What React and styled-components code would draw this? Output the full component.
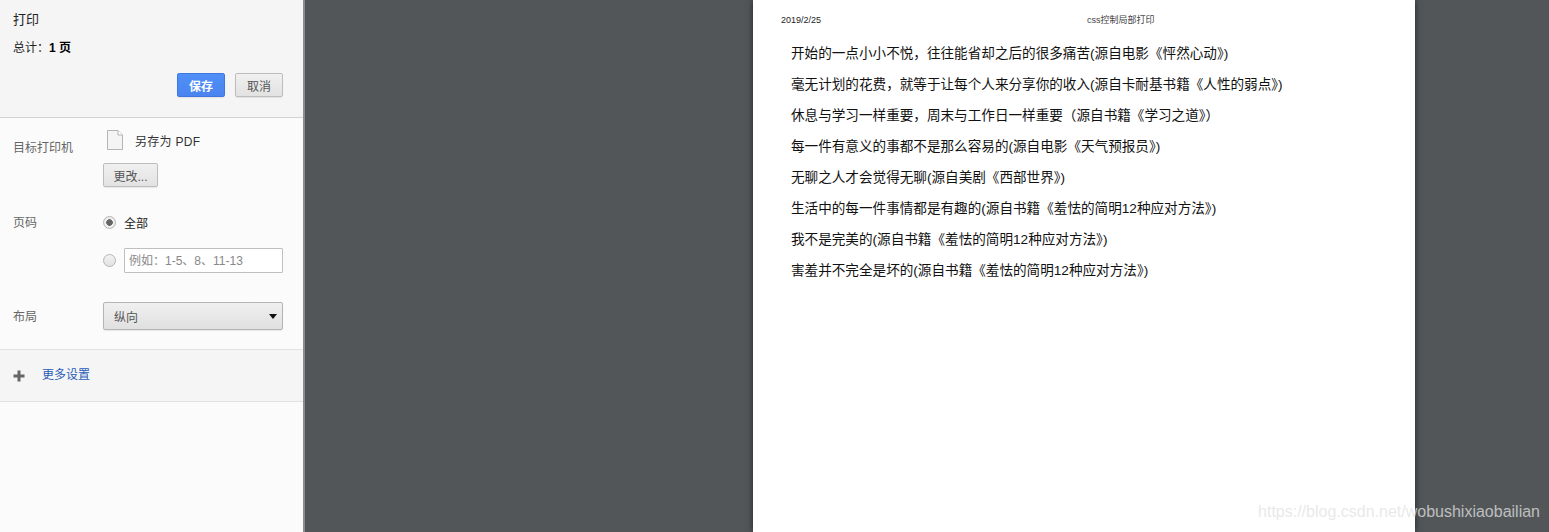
import React from "react";
import styled, { createGlobalStyle } from "styled-components";

const lines = [
  "开始的一点小小不悦，往往能省却之后的很多痛苦(源自电影《怦然心动》)",
  "毫无计划的花费，就等于让每个人来分享你的收入(源自卡耐基书籍《人性的弱点》)",
  "休息与学习一样重要，周末与工作日一样重要（源自书籍《学习之道》）",
  "每一件有意义的事都不是那么容易的(源自电影《天气预报员》)",
  "无聊之人才会觉得无聊(源自美剧《西部世界》)",
  "生活中的每一件事情都是有趣的(源自书籍《羞怯的简明12种应对方法》)",
  "我不是完美的(源自书籍《羞怯的简明12种应对方法》)",
  "害羞并不完全是坏的(源自书籍《羞怯的简明12种应对方法》)",
];

const App = () => {
  return (
    <Layout>
      <GlobalStyle />
      <Sidebar>
        <Header>
          <Title>打印</Title>
          <Total>
            总计：<b>1 页</b>
          </Total>
          <Actions>
            <SaveButton>保存</SaveButton>
            <Button>取消</Button>
          </Actions>
        </Header>
        <Settings>
          <Row>
            <Label>目标打印机</Label>
            <Control>
              <Destination>
                <svg width="16" height="20" viewBox="0 0 16 20">
                  <path
                    d="M0.5 0.5H11L15.5 5V19.5H0.5Z"
                    fill="#f4f4f4"
                    stroke="#b4b4b4"
                  />
                  <path d="M11 0.5V5H15.5" fill="#fff" stroke="#b4b4b4" />
                </svg>
                <span>另存为 PDF</span>
              </Destination>
              <ChangeButton>更改...</ChangeButton>
            </Control>
          </Row>
          <PagesRow>
            <Label>页码</Label>
            <Control>
              <RadioRow>
                <Radio checked />
                <span>全部</span>
              </RadioRow>
              <RangeRow>
                <Radio />
                <RangeInput placeholder="例如：1-5、8、11-13" />
              </RangeRow>
            </Control>
          </PagesRow>
          <LayoutRow>
            <Label>布局</Label>
            <Select>
              <span>纵向</span>
              <Caret />
            </Select>
          </LayoutRow>
        </Settings>
        <More>
          <svg width="12" height="12" viewBox="0 0 12 12">
            <path d="M4.5 0.5h3v4h4v3h-4v4h-3v-4h-4v-3h4z" fill="#666" />
          </svg>
          <MoreLink>更多设置</MoreLink>
        </More>
      </Sidebar>
      <Preview>
        <Sheet>
          <SheetHeader>
            <span>2019/2/25</span>
            <SheetTitle>css控制局部打印</SheetTitle>
          </SheetHeader>
          {lines.map(line => (
            <Line key={line}>{line}</Line>
          ))}
        </Sheet>
      </Preview>
      <Watermark>https://blog.csdn.net/wobushixiaobailian</Watermark>
    </Layout>
  );
};

export default App;

const GlobalStyle = createGlobalStyle`
  html, body {
    margin: 0;
    height: 100%;
    overflow: hidden;
  }

  body {
    font-family: "Liberation Sans", "Noto Sans CJK SC", sans-serif;
  }
`;

const Layout = styled.div`
  display: flex;
  position: relative;
  height: 532px;
  overflow: hidden;
  background-color: #525659;
`;

const Sidebar = styled.aside`
  width: 303px;
  flex-shrink: 0;
  background-color: #fbfbfb;
  border-right: 2px solid #8a8c8e;
  font-size: 12px;
  color: #555;
`;

const Header = styled.header`
  height: 118px;
  box-sizing: border-box;
  padding: 11px 20px 0 13px;
  background-color: #f5f5f5;
  border-bottom: 1px solid #d2d2d2;
`;

const Title = styled.div`
  font-size: 13px;
  line-height: 18px;
  color: #222;
`;

const Total = styled.div`
  margin-top: 11px;
  font-size: 12px;
  line-height: 16px;
  color: #222;

  & > b {
    color: #000;
  }
`;

const Actions = styled.div`
  display: flex;
  justify-content: flex-end;
  gap: 10px;
  margin-top: 17px;
`;

const Button = styled.button`
  height: 24px;
  width: 48px;
  box-sizing: border-box;
  padding: 0;
  font-family: inherit;
  font-size: 12px;
  color: #555;
  background: linear-gradient(#f0f0f0, #e2e2e2);
  border: 1px solid #bdbdbd;
  border-radius: 2px;
  box-shadow: 0 1px 1px rgba(0, 0, 0, 0.08);
`;

const SaveButton = styled(Button)`
  font-weight: bold;
  color: #fff;
  background: linear-gradient(#4f8ff7, #4a84f0);
  border-color: #3f78e0;
`;

const ChangeButton = styled(Button)`
  width: 55px;
  margin-top: 12px;
`;

const Settings = styled.div`
  padding: 11px 20px 19px 13px;
  border-bottom: 1px solid #e2e2e2;
`;

const Row = styled.div`
  display: flex;
`;

const PagesRow = styled(Row)`
  margin-top: 27px;
`;

const LayoutRow = styled(Row)`
  align-items: center;
  margin-top: 29px;
`;

const Label = styled.div`
  width: 90px;
  flex-shrink: 0;
  line-height: 16px;
  color: #666;
  padding-top: 11px;

  ${PagesRow} & {
    padding-top: 1px;
  }

  ${LayoutRow} & {
    padding-top: 2px;
  }
`;

const Control = styled.div`
  flex: 1;
  min-width: 0;
`;

const Destination = styled.div`
  display: flex;
  align-items: center;
  gap: 12px;
  padding-left: 4px;
  color: #333;
  height: 22px;
  letter-spacing: 0.3px;
`;

const RadioRow = styled.div`
  display: flex;
  align-items: center;
  gap: 8px;
  height: 16px;
  color: #222;
`;

const RangeRow = styled(RadioRow)`
  margin-top: 18px;
  height: 25px;
`;

const Radio = styled.span`
  width: 13px;
  height: 13px;
  flex-shrink: 0;
  box-sizing: border-box;
  border: 1px solid #b5b5b5;
  border-radius: 50%;
  background: ${props =>
    props.checked
      ? "radial-gradient(circle, #666 0 3px, #eee 3.5px)"
      : "linear-gradient(#f2f2f2, #e2e2e2)"};
`;

const RangeInput = styled.input`
  flex: 1;
  min-width: 0;
  height: 25px;
  box-sizing: border-box;
  padding: 0 4px;
  font-family: inherit;
  font-size: 12px;
  background-color: #fff;
  border: 1px solid #bfbfbf;
  border-radius: 1px;
  outline: none;

  &::placeholder {
    color: #888;
    opacity: 1;
  }
`;

const Select = styled.div`
  display: flex;
  flex: 1;
  align-items: center;
  justify-content: space-between;
  height: 28px;
  box-sizing: border-box;
  padding: 0 5px 0 10px;
  color: #555;
  background: linear-gradient(#f0f0f0, #e0e0e0);
  border: 1px solid #b5b5b5;
  border-radius: 2px;
  box-shadow: 0 1px 1px rgba(0, 0, 0, 0.08);
`;

const Caret = styled.span`
  width: 0;
  height: 0;
  border-left: 4.5px solid transparent;
  border-right: 4.5px solid transparent;
  border-top: 5px solid #111;
`;

const More = styled.div`
  display: flex;
  align-items: center;
  gap: 17px;
  height: 51px;
  padding-left: 13px;
  background-color: #f5f5f5;
  border-bottom: 1px solid #e2e2e2;
`;

const MoreLink = styled.a`
  padding-bottom: 5px;
  font-size: 12px;
  color: #2a5db8;
`;

const Preview = styled.main`
  flex: 1;
  min-width: 0;
  padding-left: 448px;
`;

const Sheet = styled.section`
  width: 662px;
  height: 532px;
  box-sizing: border-box;
  padding: 13px 0 0 38px;
  background-color: #fff;
  box-shadow: 0 0 6px rgba(0, 0, 0, 0.6);
`;

const SheetHeader = styled.div`
  display: flex;
  margin-left: -10px;
  margin-bottom: 17px;
  font-size: 9px;
  line-height: 14px;
  color: #222;
`;

const SheetTitle = styled.span`
  margin-left: 266px;
  color: #444;
`;

const Line = styled.p`
  margin: 0 0 11px;
  font-size: 13.6px;
  line-height: 20px;
  color: #111;
`;

const Watermark = styled.div`
  position: absolute;
  right: 9px;
  bottom: 10px;
  font-size: 16px;
  line-height: 20px;
  color: rgba(225, 225, 225, 0.76);
`;
